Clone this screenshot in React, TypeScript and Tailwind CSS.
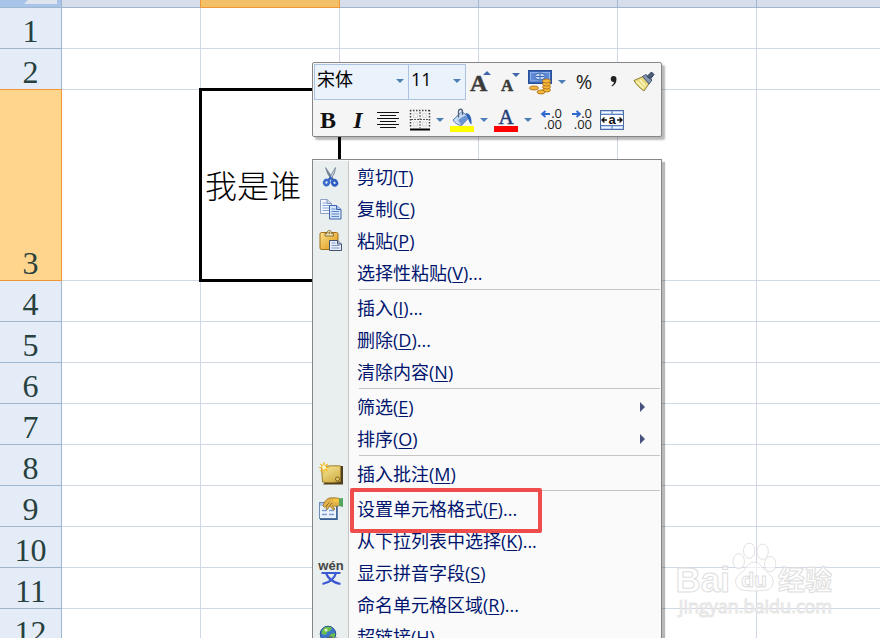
import React from "react";

const rows = [1, 2, 3, 4, 5, 6, 7, 8, 9, 10, 11, 12];
const columns = ["A", "B", "C", "D", "E", "F"];

const Caret: React.FC = () => (
  <svg width="8" height="4" viewBox="0 0 8 4" aria-hidden="true">
    <path d="M0 0h8L4 4z" fill="#4f7fb8" />
  </svg>
);

const ScissorsIcon = () => (
  <svg width="24" height="24" viewBox="0 0 24 24" fill="none">
    <path d="M6.500 2.500l2 6 4.500 7 1.500-1.500z" fill="#6e7f96" stroke="#66758a" strokeWidth="0.600" />
    <path d="M16.500 2.500L15.500 8l-4 7-1.500-1.500z" fill="#c4d0e0" stroke="#66758a" strokeWidth="0.700" />
    <ellipse cx="7.500" cy="17.500" rx="2.400" ry="2.600" stroke="#3a6cce" strokeWidth="2.600" transform="rotate(30 7.500 17.500)" />
    <ellipse cx="15.500" cy="17.800" rx="2.300" ry="2.600" stroke="#2f5fc2" strokeWidth="2.600" transform="rotate(-30 15.500 17.800)" />
    <path d="M9.500 15l2-2.500 2 2.500" stroke="#2f5fc2" strokeWidth="2" />
  </svg>
);

const CopyIcon = () => (
  <svg width="24" height="24" viewBox="0 0 24 24" fill="none">
    <path d="M1.500 2.500H8l4.500 4v10h-11z" fill="#f4f8fe" stroke="#8ba0c4" />
    <path d="M8 2.500v4h4.500" fill="#cbd9ef" stroke="#7c93bd" />
    <path d="M3.500 6h4M3.500 8.500H11M3.500 11H11M3.500 13.500H11" stroke="#85a6dc" />
    <path d="M10.500 8.500h7l4.500 4v9.500H10.500z" fill="#d3e3fa" stroke="#3f64ad" />
    <path d="M17.500 8.500v4H22" fill="#a9c2ea" stroke="#3f64ad" />
    <path d="M12.500 12h4M12.500 14.500H20M12.500 17H20M12.500 19.500H20" stroke="#5f87cc" />
  </svg>
);

const PasteIcon = () => (
  <svg width="24" height="24" viewBox="0 0 24 24" fill="none">
    <defs>
      <linearGradient id="board" x1="0" y1="0" x2="1" y2="1">
        <stop offset="0" stopColor="#fbe28a" />
        <stop offset="1" stopColor="#dc9310" />
      </linearGradient>
    </defs>
    <rect x="1" y="3.500" width="18" height="17" rx="1.500" fill="url(#board)" stroke="#a56f18" />
    <path d="M6 7V4.500h2c0-2.200 1-3 2.300-3s2.200.8 2.200 3h2V7z" fill="#efe2ad" stroke="#857241" />
    <circle cx="10.300" cy="4" r="1" fill="#857241" />
    <path d="M10.500 11.500h8l4 3.500v6.500h-12z" fill="#e7eef9" stroke="#43536f" />
    <path d="M18.500 11.500V15h4" fill="#b7c6e0" stroke="#43536f" />
    <path d="M12.500 14h4M12.500 16.500h8M12.500 19h8" stroke="#7c95c1" />
  </svg>
);

const CommentIcon = () => (
  <svg width="24" height="24" viewBox="0 0 24 24" fill="none">
    <defs>
      <linearGradient id="note" x1="0" y1="0" x2="0.600" y2="1">
        <stop offset="0" stopColor="#f9ea98" />
        <stop offset="1" stopColor="#d3b04c" />
      </linearGradient>
    </defs>
    <path d="M4 22.500h20V4h-3z" fill="#50401f" />
    <path d="M2.500 5c4-1 12-1.500 19-1v15.500c-6 1-12 1.500-18 .5z" fill="url(#note)" stroke="#9a7c2b" />
    <circle cx="18.500" cy="17" r="2" fill="#e8ca68" stroke="#7d6224" />
    <path d="M5 0v11M0 5.500h10M1.500 2l7 7M8.500 2l-7 7" stroke="#f5b51e" strokeWidth="1.200" />
    <circle cx="5" cy="5.500" r="2" fill="#fff9d2" />
  </svg>
);

const FormatCellsIcon = () => (
  <svg width="24" height="24" viewBox="0 0 24 24" fill="none">
    <rect x="0.500" y="5.500" width="17" height="16" fill="#edf3fc" stroke="#6e8cb8" />
    <path d="M18 9v13.200H1" stroke="#395f93" strokeWidth="1.500" />
    <rect x="1" y="6" width="16" height="3" fill="#a9c5eb" />
    <path d="M3 13.500h5M3 17.500h5M10 13.500h5M10 17.500h5" stroke="#7b9dd2" strokeWidth="1.500" />
    <path d="M4 9c1-4 3.500-7.500 7-8 3-.3 7-.2 9.500.5v7c-3 1-5 .5-7 .5L16 12l-1.500 1-4-4-2 3.500-1.500-.5L8 8l-2.500 2.500z" fill="#e2b34c" stroke="#92691d" strokeWidth="0.800" />
    <path d="M8 8l2.500-2.500M10.500 9L13 6" stroke="#92691d" />
    <path d="M14 2c2-.5 4.500-.5 6.500 0v3H14z" fill="#f5c542" />
    <path d="M20 1.500L24 1v9l-4-1z" fill="#56a55c" />
  </svg>
);

const PhoneticIcon = () => (
  <svg width="24" height="26" viewBox="0 0 24 26" fill="none" className="overflow-visible">
    <text x="12" y="10" textAnchor="middle" fontFamily="'Liberation Sans', sans-serif" fontSize="13" fontWeight="700" fill="#444">
      wén
    </text>
    <path d="M2.500 13h19" stroke="#3c5ad2" strokeWidth="2" />
    <path d="M17 13c-1.500 5.500-6.500 9.500-13.500 11M7 13c2 5.500 7 9.500 14.500 11" stroke="#3c5ad2" strokeWidth="2.200" />
  </svg>
);

const GlobeIcon = () => (
  <svg width="24" height="24" viewBox="0 0 24 24" fill="none">
    <circle cx="9" cy="9" r="7.800" fill="#3d77c9" stroke="#245092" />
    <path d="M5 3c3-2 6-1 8 0l-2 3-3 1-1 3-4-1c-1-2 .5-4.500 2-6zM12 9l4-1c.5 3-1 6-4 7l-2-3z" fill="#6cc04a" />
    <path d="M7 16a3.500 3.500 0 013.500-3.500h3M13 20.500h4a3.500 3.500 0 000-7" stroke="#55606e" strokeWidth="2.200" />
    <circle cx="7" cy="5" r="1.600" fill="#d5f0c8" />
  </svg>
);

const MoneyIcon = () => (
  <svg width="24" height="26" viewBox="0 0 24 26" fill="none">
    <rect x="0.500" y="1.500" width="23" height="13" fill="#3763b4" stroke="#2a4f94" />
    <rect x="2.500" y="3.500" width="19" height="8.500" fill="#5f8bd6" stroke="#8fb1ea" />
    <ellipse cx="12" cy="7.500" rx="5" ry="3.500" fill="#c4d7f6" stroke="#3b66b1" />
    <path d="M12 4v7M8 7.500h8" stroke="#3b66b1" />
    <g fill="#f3b53c" stroke="#a8690f" strokeWidth="0.800">
      <ellipse cx="18.500" cy="21" rx="4" ry="2" />
      <ellipse cx="18.500" cy="18" rx="4" ry="2" />
      <ellipse cx="18.500" cy="15" rx="4" ry="2" />
      <ellipse cx="18.500" cy="12" rx="4" ry="2" />
      <ellipse cx="6" cy="19" rx="4.500" ry="2" />
      <ellipse cx="13" cy="23" rx="4" ry="2" />
    </g>
  </svg>
);

const BrushIcon = () => (
  <svg width="22" height="20" viewBox="0 0 22 20" fill="none">
    <path d="M1 8.500l9-4 6.500 6.500-5.500 8C7 16 3 12.500 1 8.500z" fill="#e9da7c" stroke="#8f8238" />
    <path d="M3.500 9.500l7 6.500M7 8l5.500 6" stroke="#fbf5c2" strokeWidth="1.500" />
    <path d="M9.500 4.500l3.500-2 6 5.500-3 4z" fill="#8597b0" stroke="#46566f" />
    <path d="M14 4.500L18.500 0 21 2.500 17.500 7z" fill="#4d5c78" stroke="#2f3d57" />
  </svg>
);

const AlignIcon = () => (
  <svg width="22" height="18" viewBox="0 0 22 18" stroke="#111" strokeWidth="1">
    <path d="M0 1.500h22M3 4.500h16M0 7.500h22M3 10.500h16M0 13.500h22M3 16.500h16" />
  </svg>
);

const BordersIcon = () => (
  <svg width="22" height="22" viewBox="0 0 22 22" fill="none">
    <path d="M1.500 1v18M20.500 1v18M1 1.500h20" stroke="#444" strokeWidth="1.500" strokeDasharray="1.500 1.500" />
    <path d="M11 3v16M2 10.500h18" stroke="#555" strokeDasharray="2 1" />
    <path d="M4.500 4.500h4v4h-4zM13.500 4.500h4v4h-4zM4.500 13h4v4h-4zM13.500 13h4v4h-4z" stroke="#dadada" />
    <path d="M1 20.500h20" stroke="#000" strokeWidth="2" />
  </svg>
);

const FillIcon = () => (
  <svg width="24" height="24" viewBox="0 0 24 24" fill="none">
    <path d="M3 12L12 3.500l7 6-7.500 8c-3.500-.5-7-2.500-8.500-5.500z" fill="#c7daf5" stroke="#5c7db3" />
    <path d="M8 12l7-4.500 4 2-7.500 8z" fill="#6c94d3" />
    <path d="M8.500 9.500V3.500c0-3 4-3 4 0V7" stroke="#53627b" strokeWidth="1.300" />
    <path d="M15.500 5c4.500 0 6.500 4.500 6 11.500-2.500-1.500-3-6-4.500-8z" fill="#2e62b6" />
    <path d="M0 18h24v6H0z" fill="#ff0" />
  </svg>
);

type DecimalProps = { grow?: boolean };

const DecimalIcon: React.FC<DecimalProps> = ({ grow }) => (
  <svg width="22" height="22" viewBox="0 0 22 22" fill="none" className="overflow-visible">
    <path d={grow ? "M1 5h8M4.500 2L1 5l3.500 3" : "M1 5h8M5.500 2L9 5 5.500 8"} stroke="#2f6ad0" strokeWidth="1.800" />
    <g fontFamily="'Open Sans', sans-serif" fontSize="13" fill="#222">
      <text x="21" y="9" textAnchor="end">.0</text>
      <text x="21" y="20" textAnchor="end">.00</text>
    </g>
  </svg>
);

const MergeIcon = () => (
  <svg width="24" height="20" viewBox="0 0 24 20" fill="none">
    <rect x="0.500" y="0.500" width="23" height="19" fill="#bfd3f2" stroke="#4b6ba5" />
    <path d="M1 4.500h22M1 15.500h22M12 1v4M12 15v4" stroke="#5e80be" />
    <path d="M2 2.500h9M13 2.500h9M2 17.500h9M13 17.500h9" stroke="#f3f8ff" />
    <rect x="1" y="5" width="22" height="10" fill="#fff" />
    <path d="M2 10h5M17 10h5M4.500 7.500L2 10l2.500 2.500M19.500 7.500L22 10l-2.500 2.500" stroke="#111" strokeWidth="1.400" />
    <text x="12" y="14" textAnchor="middle" fontFamily="'Liberation Sans', sans-serif" fontSize="13" fontWeight="700" fill="#111">
      a
    </text>
  </svg>
);

type MenuEntry =
  | { separator: true }
  | {
      separator?: false;
      label: string;
      hotkey: string;
      dots?: boolean;
      submenu?: boolean;
      marked?: boolean;
      icon?: React.ReactNode;
    };

const menu: MenuEntry[] = [
  { label: "剪切", hotkey: "T", icon: <ScissorsIcon /> },
  { label: "复制", hotkey: "C", icon: <CopyIcon /> },
  { label: "粘贴", hotkey: "P", icon: <PasteIcon /> },
  { label: "选择性粘贴", hotkey: "V", dots: true },
  { separator: true },
  { label: "插入", hotkey: "I", dots: true },
  { label: "删除", hotkey: "D", dots: true },
  { label: "清除内容", hotkey: "N" },
  { separator: true },
  { label: "筛选", hotkey: "E", submenu: true },
  { label: "排序", hotkey: "O", submenu: true },
  { separator: true },
  { label: "插入批注", hotkey: "M", icon: <CommentIcon /> },
  { separator: true },
  { label: "设置单元格格式", hotkey: "F", dots: true, marked: true, icon: <FormatCellsIcon /> },
  { label: "从下拉列表中选择", hotkey: "K", dots: true },
  { label: "显示拼音字段", hotkey: "S", icon: <PhoneticIcon /> },
  { label: "命名单元格区域", hotkey: "R", dots: true },
  { label: "超链接", hotkey: "H", dots: true, icon: <GlobeIcon /> },
];

const Sheet: React.FC = () => (
  <table className="w-full table-fixed border-separate border-spacing-0">
    <colgroup>
      <col className="w-[62px]" />
      {columns.map((c) => (
        <col key={c} className={c === "F" ? "" : "w-[139px]"} />
      ))}
    </colgroup>
    <thead>
      <tr>
        <th className="h-2 border-r border-b border-[#9eb6ce] bg-[#a9c4e9] p-0">
          <svg className="ml-6 block" width="34" height="7" viewBox="0 0 34 7" aria-hidden="true">
            <path d="M4 0h29v4H0z" fill="#dfe5ee" />
          </svg>
        </th>
        {columns.map((c) => (
          <th
            key={c}
            aria-label={c}
            className={
              c === "B"
                ? "h-2 border-r border-b border-[#f29536] bg-[#f2c167] p-0"
                : c === "A"
                  ? "h-2 border-r border-b border-r-[#f29536] border-b-[#9eb6ce] bg-[#d5deea] p-0"
                  : "h-2 border-r border-b border-[#9eb6ce] bg-[#d5deea] p-0 last:border-r-0"
            }
          />
        ))}
      </tr>
    </thead>
    <tbody>
      {rows.map((row) => (
        <tr key={row}>
          <th
            scope="row"
            className={`border-r border-b p-0 text-center align-bottom font-['Liberation_Serif',serif] text-[32px] leading-[34px] font-normal text-[#27413e] ${
              row === 3
                ? "h-[191px] border-[#f29536] bg-[#ffd58d]"
                : row === 2
                  ? "h-[41px] border-r-[#9eb6ce] border-b-[#f29536] bg-[#e4ecf7]"
                  : "h-[41px] border-[#9eb6ce] bg-[#e4ecf7]"
            }`}
          >
            {row}
          </th>
          {columns.map((c) =>
            c === "B" && row === 3 ? (
              <td
                key={c}
                className="relative border-r border-b border-[#d0d7e5] p-0 pt-1 pl-1 align-middle font-['Liberation_Serif','Noto_Sans_CJK_SC',serif] text-[32px] leading-10 font-light whitespace-nowrap text-black"
              >
                我是谁
                <span className="absolute -inset-0.5 border-3 border-black" />
              </td>
            ) : (
              <td key={c} className="border-r border-b border-[#d0d7e5] p-0 last:border-r-0" />
            ),
          )}
        </tr>
      ))}
    </tbody>
  </table>
);

type ToolProps = { label: string; className: string; children: React.ReactNode };

const Tool: React.FC<ToolProps> = ({ label, className, children }) => (
  <button
    type="button"
    aria-label={label}
    className={`flex h-8 shrink-0 items-center justify-center ${className}`}
  >
    {children}
  </button>
);

type ComboProps = { label: string; value: string; className: string };

const Combo: React.FC<ComboProps> = ({ label, value, className }) => (
  <div className={`relative h-9 shrink-0 border border-[#abc3e0] bg-[#eaf2fb] ${className}`}>
    <select
      aria-label={label}
      defaultValue={value}
      className="block h-7 w-full appearance-none bg-transparent pl-0.5 text-lg leading-7 text-black outline-none"
    >
      <option>{value}</option>
    </select>
    <span className="pointer-events-none absolute top-3.5 right-1 flex">
      <Caret />
    </span>
  </div>
);

const MiniToolbar: React.FC = () => (
  <div
    role="toolbar"
    aria-label="格式"
    className="absolute top-[62px] left-[312px] w-[350px] rounded-xs border border-[#868686] bg-[#f5f5f5] p-px pb-0 shadow-[3px_3px_2px_rgba(0,0,0,0.28)]"
  >
    <div className="flex h-9 items-center">
      <Combo label="字体" value="宋体" className="w-[95px]" />
      <Combo label="字号" value="11" className="-ml-px w-[58px]" />
      <Tool label="增大字号" className="ml-1 w-6">
        <svg width="24" height="28" viewBox="0 0 24 28" className="overflow-visible">
          <text x="0" y="23" fontFamily="'Liberation Serif', serif" fontSize="24" fontWeight="700" fill="#3a3a3a" stroke="#3a3a3a" strokeWidth="0.500">A</text>
          <path d="M13 7l4-4 4 4z" fill="#3f66ad" />
        </svg>
      </Tool>
      <Tool label="减小字号" className="ml-1 w-6">
        <svg width="24" height="28" viewBox="0 0 24 28" className="overflow-visible">
          <text x="3" y="23" fontFamily="'Liberation Serif', serif" fontSize="17" fontWeight="700" fill="#3a3a3a" stroke="#3a3a3a" strokeWidth="0.500">A</text>
          <path d="M14 5h8l-4 4z" fill="#3f66ad" />
        </svg>
      </Tool>
      <Tool label="会计数字格式" className="ml-1.5 w-6">
        <MoneyIcon />
      </Tool>
      <Tool label="更多货币" className="ml-0.5 w-4">
        <Caret />
      </Tool>
      <Tool label="百分比样式" className="w-7 text-xl text-[#222]">
        %
      </Tool>
      <Tool label="千位分隔样式" className="ml-0.5 w-7">
        <svg width="8" height="14" viewBox="0 0 8 14">
          <path d="M3.500 1a3 3 0 013 3c0 4-2 6-4.500 7.500l-.5-.8C3 9.500 3.800 8.500 4 7a3 3 0 11-.5-6z" fill="#222" />
        </svg>
      </Tool>
      <Tool label="格式刷" className="ml-0.5 w-7">
        <BrushIcon />
      </Tool>
    </div>
    <div className="flex h-9 items-center pt-1 pl-1">
      <Tool label="加粗" className="w-5 font-['Liberation_Serif',serif] text-2xl font-bold text-[#111]">
        B
      </Tool>
      <Tool label="倾斜" className="ml-2.5 w-5 font-['Liberation_Serif',serif] text-2xl font-bold text-[#111] italic">
        I
      </Tool>
      <Tool label="居中" className="ml-2 w-6">
        <AlignIcon />
      </Tool>
      <Tool label="边框" className="ml-2 w-6">
        <BordersIcon />
      </Tool>
      <Tool label="更多边框" className="w-4">
        <Caret />
      </Tool>
      <Tool label="填充颜色" className="w-7">
        <FillIcon />
      </Tool>
      <Tool label="更多填充颜色" className="w-4">
        <Caret />
      </Tool>
      <Tool label="字体颜色" className="w-7">
        <svg width="24" height="24" viewBox="0 0 24 24" className="overflow-visible">
          <text x="12" y="16" textAnchor="middle" fontFamily="'Liberation Serif', serif" fontSize="21" fill="#1f3c78" stroke="#1f3c78" strokeWidth="0.500">A</text>
          <path d="M0 18h24v6H0z" fill="#f00" />
        </svg>
      </Tool>
      <Tool label="更多字体颜色" className="w-4">
        <Caret />
      </Tool>
      <Tool label="增加小数位数" className="ml-1 w-6">
        <DecimalIcon grow />
      </Tool>
      <Tool label="减少小数位数" className="ml-1.5 w-6">
        <DecimalIcon />
      </Tool>
      <Tool label="合并后居中" className="ml-1.5 w-6">
        <MergeIcon />
      </Tool>
    </div>
  </div>
);

const ContextMenu: React.FC = () => (
  <ul className="absolute top-[159px] left-[312px] w-[350px] border border-[#868686] bg-[#fafafa] py-px shadow-[3px_3px_1px_rgba(0,0,0,0.28)]">
    {menu.map((entry, i) =>
      entry.separator ? (
        <li key={i} role="separator" className="flex h-[3px]">
          <span className="w-9 border-r border-[#c5c5c5] bg-[#e9eeee]" />
          <span className="mr-px ml-2.5 flex-1 border-t border-[#c5c5c5]" />
        </li>
      ) : (
        <li key={i} className="flex h-8">
          <span className="flex w-9 items-center justify-center border-r border-[#c5c5c5] bg-[#e9eeee]">
            {entry.icon}
          </span>
          <button
            type="button"
            className="relative flex flex-1 items-center pr-4 pl-2 text-left text-lg leading-8 text-[#00156e]"
          >
            <span className="flex-1">
              {entry.label}(<span className="underline underline-offset-2">{entry.hotkey}</span>)
              {entry.dots && "..."}
            </span>
            {entry.submenu && (
              <svg width="5" height="10" viewBox="0 0 5 10" aria-hidden="true">
                <path d="M0 0l5 5-5 5z" fill="#44527c" />
              </svg>
            )}
            {entry.marked && (
              <span className="absolute -top-[5px] -bottom-2 left-px z-10 w-48 rounded-xs border-4 border-[#ef4c4c]" />
            )}
          </button>
        </li>
      ),
    )}
  </ul>
);

const Watermark: React.FC = () => (
  <div className="absolute right-12 bottom-5 flex flex-col items-end text-white/60">
    <div className="flex items-end font-bold [-webkit-text-stroke:1px_#dedede]">
      <span className="font-['Liberation_Sans',sans-serif] text-[35px] leading-7">Bai</span>
      <span className="relative ml-0.5 block">
        <svg width="44" height="54" viewBox="0 0 46 54" fill="#fff" fillOpacity="0.600" stroke="#dedede" strokeWidth="1">
          <ellipse cx="7" cy="21" rx="6" ry="8" />
          <ellipse cx="18" cy="10" rx="6" ry="8" />
          <ellipse cx="32" cy="11" rx="6" ry="8" />
          <ellipse cx="40" cy="24" rx="6" ry="8" />
          <path d="M23 22c6 0 8 5 12 9 4 3 9 7 8 13-1 7-8 8-20 8S5 51 4 44c-1-6 3-9 7-12 4-4 6-10 12-10z" />
        </svg>
        <span className="absolute inset-x-0 bottom-0 text-center font-['Liberation_Sans',sans-serif] text-[21px] leading-7">
          du
        </span>
      </span>
      <span className="ml-0.5 text-[27px] leading-7">经验</span>
    </div>
    <span className="text-lg leading-6 [-webkit-text-stroke:1px_#e4e4e4]">jingyan.baidu.com</span>
  </div>
);

const App: React.FC = () => (
  <main className="relative h-screen overflow-hidden bg-white font-['Open_Sans','Noto_Sans_CJK_SC',sans-serif]">
    <Sheet />
    <MiniToolbar />
    <ContextMenu />
    <Watermark />
  </main>
);

export default App;
